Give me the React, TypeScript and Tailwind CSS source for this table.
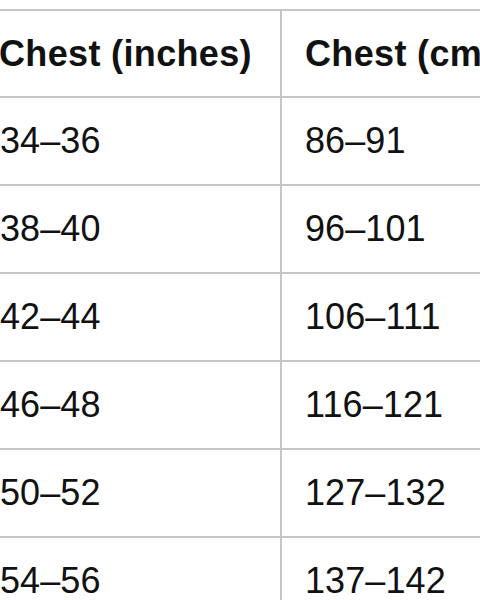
const ROWS = [
  ["34–36", "86–91"],
  ["38–40", "96–101"],
  ["42–44", "106–111"],
  ["46–48", "116–121"],
  ["50–52", "127–132"],
  ["54–56", "137–142"],
];

export default function App() {
  return (
    <div
      className="w-[480px] h-[600px] overflow-hidden bg-white text-[#111] pt-[9px]"
      style={{ fontFamily: '"Liberation Sans", Arial, sans-serif' }}
    >
      <div className="ml-[-26px] w-[700px]">
        {/* Header */}
        <div className="flex h-[87px] border-t-2 border-[#c6c6c6] font-bold text-[36px] tracking-[0.35px]">
          <div className="w-[308px] shrink-0 border-r-2 border-[#c6c6c6] pl-[25px] flex items-center">
            Chest (inches)
          </div>
          <div className="flex-1 pl-[23px] flex items-center whitespace-nowrap">Chest (cm)</div>
        </div>
        {ROWS.map(([inch, cm]) => (
          <div key={inch} className="flex h-[88px] border-t-2 border-[#c6c6c6] text-[36px] tracking-[0.1px]">
            <div className="w-[308px] shrink-0 border-r-2 border-[#c6c6c6] pl-[26px] flex items-center">
              {inch}
            </div>
            <div className="flex-1 pl-[23px] flex items-center">{cm}</div>
          </div>
        ))}
      </div>
    </div>
  );
}
